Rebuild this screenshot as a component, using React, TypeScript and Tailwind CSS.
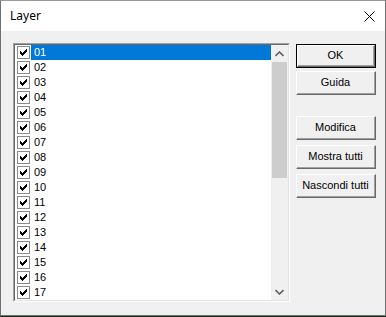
const layers = ["01", "02", "03", "04", "05", "06", "07", "08", "09", "10", "11", "12", "13", "14", "15", "16", "17"];

function Check() {
  return (
    <svg width="13" height="13" viewBox="0 0 13 13" className="shrink-0" shapeRendering="crispEdges">
      <rect x="0.5" y="0.5" width="12" height="12" fill="#fff" stroke="#8a8a8a" />
      <path d="M3 5 H4 V6 H5 V7 H6 V6 H7 V5 H8 V4 H9 V3 H10 V6 H9 V7 H8 V8 H7 V9 H6 V10 H5 V9 H4 V8 H3 Z" fill="#000" />
    </svg>
  );
}

function WinButton({ label, isDefault }: { label: string; isDefault?: boolean }) {
  return (
    <div className={`h-[24px] w-[80px] ${isDefault ? "border border-black" : ""}`}>
      <div className="h-full w-full border-t border-l border-white border-r border-b border-r-[#696969] border-b-[#696969]">
        <div className="flex h-full w-full items-center justify-center border-r border-b border-[#a0a0a0] bg-[#f0f0f0] text-[11px] text-black">
          {label}
        </div>
      </div>
    </div>
  );
}

export default function App() {
  return (
    <div className="h-[317px] w-[386px] bg-[#1c2a1c]" style={{ fontFamily: '"Liberation Sans", Arial, sans-serif' }}>
      <div className="flex h-[316px] w-[386px] flex-col border border-[#707070] border-t-[#9a9a9a] bg-[#f0f0f0]">
        {/* title bar */}
        <div className="flex h-[30px] shrink-0 items-center justify-between bg-white pl-[9px] pr-[10px]">
          <span className="text-[12px] text-black" style={{ fontFamily: '"Noto Sans", sans-serif' }}>Layer</span>
          <svg width="11" height="11" viewBox="0 0 11 11">
            <path d="M0.5 0.5 L10.5 10.5 M10.5 0.5 L0.5 10.5" stroke="#000" strokeWidth="1" />
          </svg>
        </div>

        <div className="flex gap-[6px] pl-[12px] pt-[12px]">
          {/* listbox */}
          <div className="h-[259px] w-[277px] border-t border-l border-[#a0a0a0] border-r-white border-b-white border-r border-b">
            <div className="flex h-full w-full border-t border-l border-[#696969] border-r border-b border-r-[#e3e3e3] border-b-[#e3e3e3] bg-white">
              <div className="flex flex-1 flex-col">
                {layers.map((l, i) => (
                  <div key={l} className="flex h-[15px] items-center">
                    <div className="ml-[2px] mr-[1px]">
                      <Check />
                    </div>
                    <div
                      className={`flex h-full flex-1 items-center pl-[3px] text-[11px] ${i === 0 ? "bg-[#0078d7] text-white" : "text-black"}`}
                    >
                      {l}
                    </div>
                  </div>
                ))}
              </div>
              {/* scrollbar */}
              <div className="flex w-[17px] flex-col bg-[#f0f0f0]">
                <div className="flex h-[17px] items-center justify-center">
                  <svg width="9" height="6" viewBox="0 0 9 6">
                    <path d="M0.5 5 L4.5 1 L8.5 5" fill="none" stroke="#606060" strokeWidth="1.6" />
                  </svg>
                </div>
                <div className="mx-[1px] h-[116px] bg-[#cdcdcd]" />
                <div className="flex-1" />
                <div className="flex h-[17px] items-center justify-center">
                  <svg width="9" height="6" viewBox="0 0 9 6">
                    <path d="M0.5 1 L4.5 5 L8.5 1" fill="none" stroke="#606060" strokeWidth="1.6" />
                  </svg>
                </div>
              </div>
            </div>
          </div>

          {/* buttons */}
          <div className="flex flex-col pt-[1px]">
            <WinButton label="OK" isDefault />
            <div className="mt-[3px]">
              <WinButton label="Guida" />
            </div>
            <div className="mt-[21px] flex flex-col gap-[5px]">
              <WinButton label="Modifica" />
              <WinButton label="Mostra tutti" />
              <WinButton label="Nascondi tutti" />
            </div>
          </div>
        </div>
      </div>
    </div>
  );
}
